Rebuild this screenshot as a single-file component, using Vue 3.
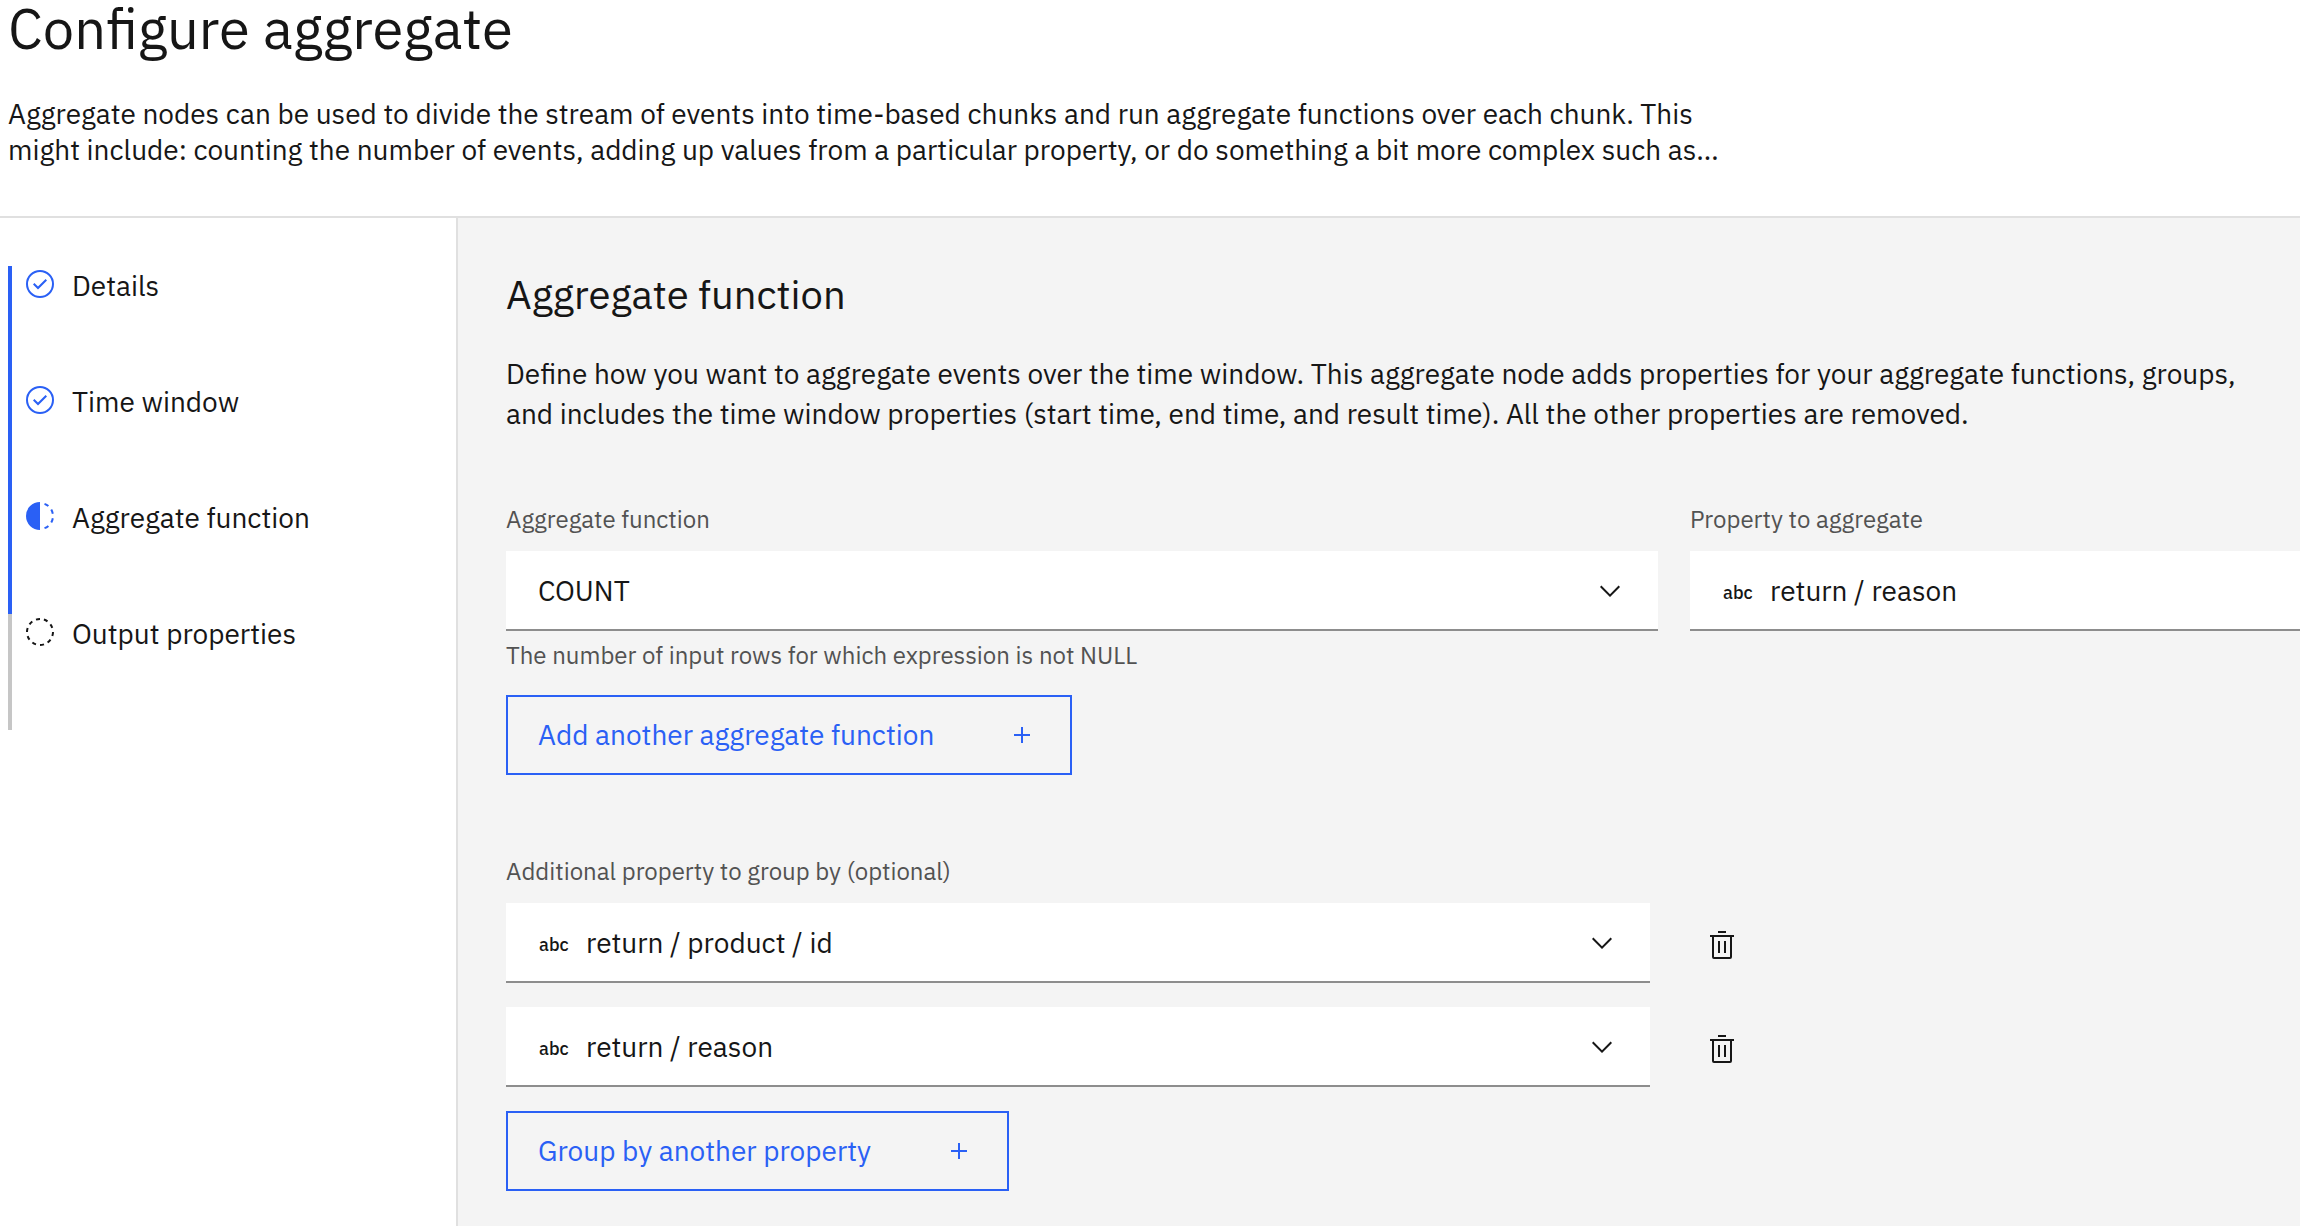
<script setup>
import { ref } from 'vue'

const steps = [
  { label: 'Details', state: 'complete' },
  { label: 'Time window', state: 'complete' },
  { label: 'Aggregate function', state: 'current' },
  { label: 'Output properties', state: 'incomplete' },
]

const aggregate = ref('COUNT')
const property = ref('return / reason')
const groups = ref(['return / product / id', 'return / reason'])

const functions = ['COUNT', 'SUM', 'AVG', 'MIN', 'MAX']
const properties = ['return / product / id', 'return / reason']

function addGroup() {
  groups.value.push(properties[0])
}

function removeGroup(index) {
  groups.value.splice(index, 1)
}
</script>

<template>
  <div class="page">
    <header class="header">
      <h1>Configure aggregate</h1>
      <p>
        Aggregate nodes can be used to divide the stream of events into time-based chunks and run
        aggregate functions over each chunk. This might include: counting the number of events,
        adding up values from a particular property, or do something a bit more complex such as…
      </p>
    </header>

    <div class="body">
      <nav class="sidebar" aria-label="Progress">
        <ol class="steps">
          <li v-for="step in steps" :key="step.label" class="step" :class="step.state">
            <svg v-if="step.state === 'complete'" class="icon" viewBox="0 0 32 32" aria-hidden="true">
              <path d="M14 21.414L9 16.413 10.413 15 14 18.586 21.585 11 23 12.415z" />
              <path d="M16 2a14 14 0 1 0 14 14A14 14 0 0 0 16 2zm0 26a12 12 0 1 1 12-12 12 12 0 0 1-12 12z" />
            </svg>
            <svg v-else-if="step.state === 'current'" class="icon" viewBox="0 0 32 32" aria-hidden="true">
              <path d="M23.764 6.859l1.285-1.531A13.976 13.976 0 0 0 20.867 2.887l-.683 1.878A11.973 11.973 0 0 1 23.764 6.859zM27.81 14l1.968-.413A13.889 13.889 0 0 0 28.14 9.046L26.409 10A12.52 12.52 0 0 1 27.81 14zM20.184 27.235l.683 1.878a13.976 13.976 0 0 0 4.182-2.441l-1.285-1.531A11.973 11.973 0 0 1 20.184 27.235zM26.409 22L28.14 23a14.14 14.14 0 0 0 1.638-4.587L27.81 18.066A12.152 12.152 0 0 1 26.409 22zM16 30V2a14 14 0 0 0 0 28z" />
            </svg>
            <svg v-else class="icon" viewBox="0 0 32 32" aria-hidden="true">
              <path d="M7.7 4.7a14.7 14.7 0 0 0-3 3.1L6.3 9A13.26 13.26 0 0 1 8.9 6.3zM4.6 12.3l-1.9-.6A12.51 12.51 0 0 0 2 16H4A11.48 11.48 0 0 1 4.6 12.3zM2.7 20.4a14.4 14.4 0 0 0 2 3.9l1.6-1.2a12.89 12.89 0 0 1-1.7-3.3zM7.8 27.3a14.4 14.4 0 0 0 3.9 2l.6-1.9A12.89 12.89 0 0 1 9 25.7zM11.7 2.7l.6 1.9A11.48 11.48 0 0 1 16 4V2A12.51 12.51 0 0 0 11.7 2.7zM24.2 27.3a15.18 15.18 0 0 0 3.1-3.1L25.7 23A11.53 11.53 0 0 1 23 25.7zM27.4 19.7l1.9.6A15.47 15.47 0 0 0 30 16H28A11.48 11.48 0 0 1 27.4 19.7zM29.2 11.6a14.4 14.4 0 0 0-2-3.9L25.6 8.9a12.89 12.89 0 0 1 1.7 3.3zM24.1 4.6a14.4 14.4 0 0 0-3.9-2l-.6 1.9a12.89 12.89 0 0 1 3.3 1.7zM20.3 29.3l-.6-1.9A11.48 11.48 0 0 1 16 28v2A21.42 21.42 0 0 0 20.3 29.3z" />
            </svg>
            <span>{{ step.label }}</span>
          </li>
        </ol>
      </nav>

      <main class="panel">
        <h2>Aggregate function</h2>
        <p class="intro">
          Define how you want to aggregate events over the time window. This aggregate node adds
          properties for your aggregate functions, groups, and includes the time window properties
          (start time, end time, and result time). All the other properties are removed.
        </p>

        <div class="fields">
          <div class="field">
            <label for="aggregate">Aggregate function</label>
            <div class="select">
              <select id="aggregate" v-model="aggregate" aria-describedby="aggregate-help">
                <option v-for="name in functions" :key="name">{{ name }}</option>
              </select>
              <svg class="icon chevron" viewBox="0 0 32 32" aria-hidden="true">
                <path d="M16 22L6 12 7.4 10.6 16 19.2 24.6 10.6 26 12z" />
              </svg>
            </div>
            <p id="aggregate-help" class="help">
              The number of input rows for which expression is not NULL
            </p>
          </div>
          <div class="field">
            <label for="property">Property to aggregate</label>
            <div class="select typed">
              <span class="type">abc</span>
              <select id="property" v-model="property">
                <option v-for="name in properties" :key="name">{{ name }}</option>
              </select>
            </div>
          </div>
        </div>

        <button type="button" class="add">
          <span>Add another aggregate function</span>
          <svg class="icon" viewBox="0 0 32 32" aria-hidden="true">
            <path d="M17 15V8H15V15H8V17H15V24H17V17H24V15z" />
          </svg>
        </button>

        <div class="groups">
          <label for="group-0">Additional property to group by (optional)</label>
          <div class="group-list">
            <div v-for="(group, index) in groups" :key="index" class="group">
              <div class="select typed">
                <span class="type">abc</span>
                <select
                  :id="`group-${index}`"
                  v-model="groups[index]"
                  :aria-label="`Group by property ${index + 1}`"
                >
                  <option v-for="name in properties" :key="name">{{ name }}</option>
                </select>
                <svg class="icon chevron" viewBox="0 0 32 32" aria-hidden="true">
                  <path d="M16 22L6 12 7.4 10.6 16 19.2 24.6 10.6 26 12z" />
                </svg>
              </div>
              <button type="button" class="remove" aria-label="Remove property" @click="removeGroup(index)">
                <svg class="icon" viewBox="0 0 32 32" aria-hidden="true">
                  <path d="M12 12H14V24H12zM18 12H20V24H18z" />
                  <path d="M4 6V8H6V28a2 2 0 0 0 2 2H24a2 2 0 0 0 2-2V8h2V6zM8 28V8H24V28z" />
                  <path d="M12 2H20V4H12z" />
                </svg>
              </button>
            </div>
          </div>
        </div>

        <button type="button" class="add" @click="addGroup">
          <span>Group by another property</span>
          <svg class="icon" viewBox="0 0 32 32" aria-hidden="true">
            <path d="M17 15V8H15V15H8V17H15V24H17V17H24V15z" />
          </svg>
        </button>
      </main>
    </div>
  </div>
</template>

<style>
body {
  margin: 0;
}
</style>

<style scoped>
.page {
  display: flex;
  flex-direction: column;
  min-height: 100vh;
  background: #fff;
  color: #161616;
  font-family: "IBM Plex Sans", Roboto, "Noto Sans", sans-serif;
  font-size: 28px;
  line-height: 36px;
}

h1,
h2,
p,
ol {
  margin: 0;
  padding: 0;
  font-weight: 400;
}

.icon {
  display: block;
  flex: none;
  width: 32px;
  height: 32px;
  fill: currentColor;
}

.header {
  padding: 0 8px 48px;
  border-bottom: 2px solid #e0e0e0;
}

h1 {
  padding-bottom: 40px;
  font-size: 56px;
  line-height: 56px;
}

.header p {
  max-width: 1750px;
}

.body {
  display: flex;
  flex: 1;
}

.sidebar {
  box-sizing: border-box;
  flex: none;
  width: 458px;
  padding: 48px 0 0 8px;
  border-right: 2px solid #e0e0e0;
}

.steps {
  list-style: none;
}

.step {
  display: flex;
  gap: 16px;
  box-sizing: border-box;
  height: 116px;
  padding: 2px 0 0 12px;
  border-left: 4px solid #2a60f5;
}

.step .icon {
  color: #2a60f5;
}

.step.incomplete {
  border-color: #c6c6c6;
}

.step.incomplete .icon {
  color: #161616;
}

.panel {
  flex: 1;
  min-width: 0;
  padding: 48px 0 32px 48px;
  background: #f4f4f4;
}

h2 {
  font-size: 40px;
  line-height: 56px;
}

.intro {
  padding: 32px 16px 69px 0;
  line-height: 40px;
}

.fields {
  display: grid;
  grid-template-columns: 17fr 9fr;
  gap: 32px;
}

.field {
  min-width: 0;
}

label,
.help {
  display: block;
  color: #525252;
  font-size: 24px;
  line-height: 32px;
}

label {
  padding-bottom: 16px;
}

.help {
  padding-top: 8px;
}

.select {
  position: relative;
}

select {
  display: block;
  box-sizing: border-box;
  width: 100%;
  height: 80px;
  padding: 2px 80px 0 32px;
  border: 0;
  border-bottom: 2px solid #8d8d8d;
  border-radius: 0;
  background: #fff;
  color: inherit;
  font: inherit;
  appearance: none;
}

.typed select {
  padding-left: 80px;
}

.type {
  position: absolute;
  top: 24px;
  left: 33px;
  font-size: 18px;
  font-weight: 500;
  pointer-events: none;
}

.chevron {
  position: absolute;
  top: 24px;
  right: 32px;
  pointer-events: none;
}

.add {
  display: flex;
  align-items: center;
  gap: 72px;
  height: 80px;
  margin-top: 24px;
  padding: 0 32px 0 30px;
  border: 2px solid #2a60f5;
  background: transparent;
  color: #2a60f5;
  font: inherit;
}

.groups {
  padding-top: 80px;
}

.group-list {
  display: grid;
  gap: 24px;
}

.group {
  display: grid;
  grid-template-columns: 37fr 20fr;
  gap: 32px;
}

.remove {
  display: grid;
  place-items: center;
  width: 80px;
  height: 80px;
  padding: 4px 0 0;
  border: 0;
  background: transparent;
  color: inherit;
}
</style>
